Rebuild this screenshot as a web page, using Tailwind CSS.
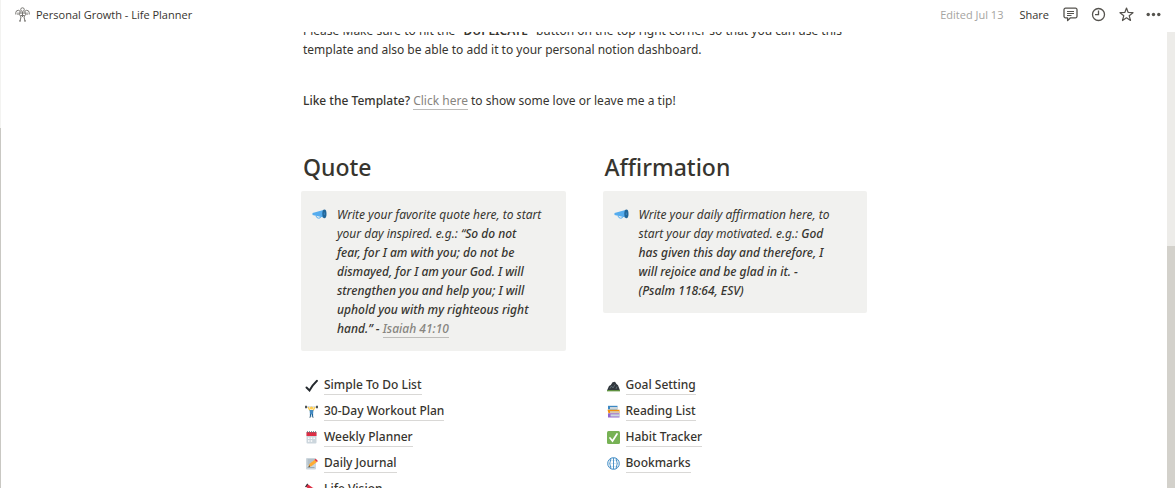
<!DOCTYPE html>
<html lang="en">
<head>
<meta charset="utf-8">
<meta name="viewport" content="width=device-width, initial-scale=1">
<title>Personal Growth - Life Planner</title>
<script src="https://cdn.jsdelivr.net/npm/@tailwindcss/browser@4"></script>
</head>
<body class="flex h-screen overflow-hidden bg-white font-['Noto_Sans','Open_Sans',sans-serif] text-[12px] leading-[19px] text-[#37352f]">
<div class="flex w-px shrink-0 flex-col" aria-hidden="true">
  <div class="h-32 bg-[#f3f3f1]"></div>
  <div class="grow bg-[#c9c8c3]"></div>
</div>
<div class="flex min-w-0 grow flex-col">
  <header class="flex h-8 shrink-0 items-center justify-between pr-[14px] pb-1 pl-[14px] font-['Open_Sans',sans-serif] text-[11px]">
    <a href="#" class="flex items-center gap-[6px]">
      <svg class="size-[15px]" viewBox="0 0 15 15" fill="none" stroke="#777571" stroke-width="1" aria-hidden="true">
        <circle cx="7.5" cy="2.6" r="1.8"/><path d="M.8 7.500V5.500Q1 3.300 3.500 3.300L5.500 4.500M14.200 7.500V5.500Q14 3.300 11.500 3.300L9.500 4.500M3 8V5.500M12 8V5.500M5 4.500l-.5 3 1.500 2.500-1 4M10 4.500l.5 3L9 10l1 4M7.500 5v5M5 6h5M5.500 8.500h4M4 14h2M9 14h2"/>
      </svg>
      <span>Personal Growth - Life Planner</span>
    </a>
    <div class="flex items-center">
      <span class="mr-4 text-[#a5a4a1]">Edited Jul 13</span>
      <button type="button" class="mr-[14px]">Share</button>
      <button type="button" class="mr-[13px]" aria-label="Comments">
        <svg class="size-[15px]" viewBox="0 0 15 15" fill="none" stroke="#55534e" stroke-width="1.300" stroke-linejoin="round" aria-hidden="true"><path d="M2.500 1.200h10a1.500 1.500 0 0 1 1.500 1.500v6.600a1.500 1.500 0 0 1-1.500 1.500H7.500L4.600 13.600v-2.800H2.500A1.500 1.500 0 0 1 1 9.300V2.700a1.500 1.500 0 0 1 1.500-1.500z"/><path stroke-width="1" d="M4 4.500h7M4 6.500h7M4 8.500h4.500"/></svg>
      </button>
      <button type="button" class="mr-[13px]" aria-label="Updates">
        <svg class="size-[15px]" viewBox="0 0 15 15" fill="none" stroke="#55534e" stroke-width="1.300" aria-hidden="true"><circle cx="7.500" cy="7.500" r="6"/><path d="M7.500 3.500v4.200H4"/></svg>
      </button>
      <button type="button" class="mr-3" aria-label="Favorite">
        <svg class="size-[15px]" viewBox="0 0 15 15" fill="none" stroke="#55534e" stroke-width="1.200" stroke-linejoin="round" aria-hidden="true"><path d="M7.500 1l1.700 4.500 4.800.2-3.800 3 1.300 4.800-4-2.700-4 2.700 1.300-4.800L1 5.700l4.800-.2z"/></svg>
      </button>
      <button type="button" aria-label="More">
        <svg class="size-[15px]" viewBox="0 0 15 15" fill="#55534e" aria-hidden="true"><circle cx="2.200" cy="7.500" r="1.700"/><circle cx="7.500" cy="7.500" r="1.700"/><circle cx="12.800" cy="7.500" r="1.700"/></svg>
      </button>
    </div>
  </header>
  <div class="flex min-h-0 grow">
    <main class="min-w-0 grow overflow-hidden">
      <div class="mx-auto -mt-[11px] max-w-[566px]">
        <p class="px-[2px]">Please Make sure to hit the "<strong class="font-semibold">DUPLICATE</strong>" button on the top right corner so that you can use this<br>template and also be able to add it to your personal notion dashboard.</p>
        <p class="mt-8 px-[2px]"><strong class="font-medium">Like the Template?</strong> <a href="#" class="border-b border-[#bdbcb9] text-[#87857f]">Click here</a> to show some love or leave me a tip!</p>
        <div class="mt-[42px] grid grid-cols-2 gap-x-[37px]">
          <section>
            <h2 class="px-[2px] text-[23px] leading-[30px] font-medium">Quote</h2>
            <div class="mt-[9px] flex gap-[10px] rounded-[2px] bg-[#f1f1ef] pt-[14px] pr-2 pb-[13px] pl-[11px]">
              <svg class="mt-[2px] h-[14px] w-[15px] shrink-0" viewBox="0 0 15 14" aria-hidden="true"><path d="M.5 6 11.500 3v7.500L.5 8z" fill="#55acee"/><path d="M4 9q.5 2 2.500 2.200T9 9.500" fill="none" stroke="#55acee"/><ellipse cx="12.400" cy="6.800" rx="2.100" ry="4.400" fill="#226699"/><path d="M12.300 5.500v2.500" stroke="#3b88c3"/></svg>
              <p class="grow whitespace-nowrap italic">Write your favorite quote here, to start<br>your day inspired. e.g.: “<strong class="font-medium">So do not<br>fear, for I am with you; do not be<br>dismayed, for I am your God. I will<br>strengthen you and help you; I will<br>uphold you with my righteous right<br>hand.” - <a href="#" class="border-b border-[#bdbcb9] text-[#87857f]">Isaiah 41:10</a></strong></p>
            </div>
          </section>
          <section>
            <h2 class="px-[2px] text-[23px] leading-[30px] font-medium">Affirmation</h2>
            <div class="mt-[9px] flex gap-[10px] rounded-[2px] bg-[#f1f1ef] pt-[14px] pr-2 pb-[13px] pl-[11px]">
              <svg class="mt-[2px] h-[14px] w-[15px] shrink-0" viewBox="0 0 15 14" aria-hidden="true"><path d="M.5 6 11.500 3v7.500L.5 8z" fill="#55acee"/><path d="M4 9q.5 2 2.500 2.200T9 9.500" fill="none" stroke="#55acee"/><ellipse cx="12.400" cy="6.800" rx="2.100" ry="4.400" fill="#226699"/><path d="M12.300 5.500v2.500" stroke="#3b88c3"/></svg>
              <p class="grow whitespace-nowrap italic">Write your daily affirmation here, to<br>start your day motivated. e.g.: <strong class="font-medium">God<br>has given this day and therefore, I<br>will rejoice and be glad in it. -<br>(Psalm 118:64, ESV)</strong></p>
            </div>
          </section>
        </div>
        <div class="mt-6 grid grid-cols-2 gap-x-[37px] font-medium">
          <ul class="space-y-[6px] px-1">
            <li><a href="#" class="flex items-center gap-[6px]">
              <svg class="size-[13px]" viewBox="0 0 13 13" fill="none" aria-hidden="true"><path d="M1.500 8.500 4.500 11.500Q7.500 6 12 1.800" stroke="#24292e" stroke-width="1.900" stroke-linecap="round"/></svg>
              <span class="border-b border-[#d9d8d6]">Simple To Do List</span></a></li>
            <li><a href="#" class="flex items-center gap-[6px]">
              <svg class="size-[13px]" viewBox="0 0 13 13" aria-hidden="true"><path d="M1 2h11" stroke="#99aab5" stroke-width=".7"/><path d="M1 .8v2.500M12 .8v2.500" stroke="#292f33" stroke-width="1.600"/><path d="M3 2 5 5.500M10 2 8 5.500" stroke="#ffcc4d" stroke-width="1.500"/><circle cx="6.500" cy="3" r="1.600" fill="#ffcc4d"/><path d="M4.500 5h4L8 9.500H5z" fill="#4289c1"/><path d="M5.500 9v3M7.500 9v3" stroke="#226699" stroke-width="1.200"/><path d="M4 12.200h2M7 12.200h2" stroke="#99aab5"/></svg>
              <span class="border-b border-[#d9d8d6]">30-Day Workout Plan</span></a></li>
            <li><a href="#" class="flex items-center gap-[6px]">
              <svg class="size-[13px]" viewBox="0 0 13 13" aria-hidden="true"><rect x="1.500" y="1" width="10" height="11.500" rx="1" fill="#ccd6dd"/><path d="M1.500 1h10v4h-10z" fill="#dd2e44"/><path d="M2 1h9" stroke="#66757f" stroke-width="1.600" stroke-dasharray="1 1"/><path d="M3 6.500h1.500v1.500H3zM5.700 6.500h1.500v1.500H5.700zM8.400 6.500h1.500v1.500H8.400zM3 9.200h1.500v1.500H3zM5.700 9.200h1.500v1.500H5.700z" fill="#fff"/></svg>
              <span class="border-b border-[#d9d8d6]">Weekly Planner</span></a></li>
            <li><a href="#" class="flex items-center gap-[6px]">
              <svg class="size-[13px]" viewBox="0 0 13 13" aria-hidden="true"><rect x="1" y="1" width="10" height="11.500" rx="1" fill="#ccd6dd"/><path d="M2.500 3h7M2.500 5h5M2.500 7h3M2.500 10.500h7" stroke="#99aab5"/><path d="m3.500 10 .8-3L10 2.500 12 5 6.300 9.200z" fill="#ffac33"/><path d="m9.500 2.800 1.300-1L12.900 4 12 5z" fill="#dd2e44"/><path d="m3.500 10 .6-1.700 1 1.200z" fill="#292f33"/></svg>
              <span class="border-b border-[#d9d8d6]">Daily Journal</span></a></li>
            <li><a href="#" class="flex items-center gap-[6px]">
              <svg class="size-[13px]" viewBox="0 0 13 13" aria-hidden="true"><path d="m1.500 2.300 10 7" stroke="#dd2e44" stroke-width="3.200"/><path d="m.5 4 2.200-3.200M7 8l2-2.800" stroke="#31373d" stroke-width="1.200"/><path d="m7 8-3 5M8 8l3 5" stroke="#66757f"/></svg>
              <span class="border-b border-[#d9d8d6]">Life Vision</span></a></li>
          </ul>
          <ul class="space-y-[6px] px-1">
            <li><a href="#" class="flex items-center gap-[6px]">
              <svg class="size-[13px]" viewBox="0 0 13 13" aria-hidden="true"><path d="M0 11.500 2 7l1.800-1L5.500 3.200 8 2.700 9.500 5l1.500 1.200 2 5.300z" fill="#31373d"/><path d="m3 9.500 1.500-2.500L6 9l2-3.500M9 10l1-2.500" fill="none" stroke="#66757f" stroke-width=".8"/><path d="M0 11.700h13" stroke="#5c913b" stroke-width="1.300"/></svg>
              <span class="border-b border-[#d9d8d6]">Goal Setting</span></a></li>
            <li><a href="#" class="flex items-center gap-[6px]">
              <svg class="size-[13px]" viewBox="0 0 13 13" aria-hidden="true"><path d="M1 .8h9.500v3.700H1z" fill="#3b88c3"/><path d="M3 2h8v2H3z" fill="#ccd6dd"/><path d="M.5 4.700h12v3.600H1.500z" fill="#f4900c"/><path d="M3 6.300h9v1.500H3z" fill="#ccd6dd"/><path d="M1 8.300h11.500v4.200H1z" fill="#9266cc"/><path d="M3.500 9.300H13v2.200H3.500z" fill="#ccd6dd"/></svg>
              <span class="border-b border-[#d9d8d6]">Reading List</span></a></li>
            <li><a href="#" class="flex items-center gap-[6px]">
              <svg class="size-[13px]" viewBox="0 0 13 13" fill="none" aria-hidden="true"><rect width="13" height="13" rx="1.500" fill="#77b255"/><path d="m3 7 2.500 3L10 3" stroke="#fff" stroke-width="1.700" stroke-linecap="round"/></svg>
              <span class="border-b border-[#d9d8d6]">Habit Tracker</span></a></li>
            <li><a href="#" class="flex items-center gap-[6px]">
              <svg class="size-[13px]" viewBox="0 0 13 13" fill="none" stroke="#3b88c3" aria-hidden="true"><circle cx="6.500" cy="6.500" r="5.800"/><path d="M6.500 1v11M4 1.500Q1.500 6.500 4 11.500M9 1.500q2.500 5 0 10" stroke-width=".9"/><path d="M1 6.500h11M2 3.500h9M2 9.500h9" stroke-width=".2"/></svg>
              <span class="border-b border-[#d9d8d6]">Bookmarks</span></a></li>
          </ul>
        </div>
      </div>
    </main>
    <div class="flex w-2 shrink-0 flex-col bg-[#edece9]" aria-hidden="true">
      <div class="mt-[214px] grow bg-[#d3d1cb]"></div>
    </div>
  </div>
</div>
</body>
</html>
